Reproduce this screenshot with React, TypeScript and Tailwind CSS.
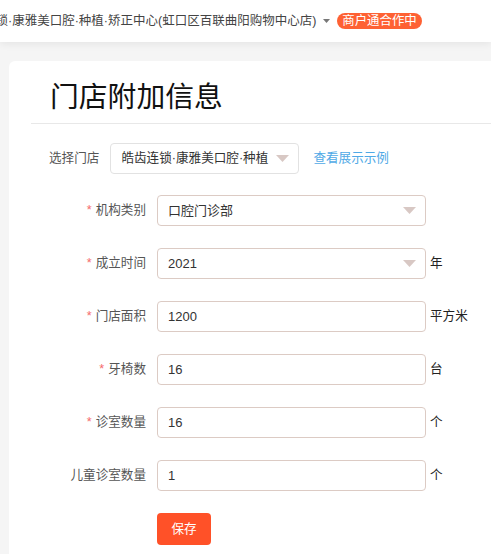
import type { JSX } from 'react';

const FONT = { fontFamily: '"Liberation Sans", "Noto Sans CJK SC", sans-serif' };

interface Field {
  readonly label: string;
  readonly value: string;
  readonly required: boolean;
  readonly select?: boolean;
  readonly unit?: string;
}

const FIELDS: Field[] = [
  { label: '机构类别', value: '口腔门诊部', required: true, select: true },
  { label: '成立时间', value: '2021', required: true, select: true, unit: '年' },
  { label: '门店面积', value: '1200', required: true, unit: '平方米' },
  { label: '牙椅数', value: '16', required: true, unit: '台' },
  { label: '诊室数量', value: '16', required: true, unit: '个' },
  { label: '儿童诊室数量', value: '1', required: false, unit: '个' },
];

function Caret(): JSX.Element {
  return (
    <svg width="13" height="7" viewBox="0 0 13 7" className="shrink-0" aria-hidden="true">
      <path d="M0 0h13L6.5 7z" fill="#d8c8c4" />
    </svg>
  );
}

function FieldRow({ f }: { readonly f: Field }): JSX.Element {
  return (
    <div className="flex h-[31px] items-center">
      <div className="w-[137px] shrink-0 text-right text-[12.6px] text-[#555]">
        {f.required && <span className="mr-[4px] text-[#f56c6c]">*</span>}
        {f.label}
      </div>
      <div className="ml-[11px] flex h-[31px] w-[269px] shrink-0 items-center justify-between rounded-[4px] border border-[#dccbc4] pl-[10px] pr-[9px] text-[13px] text-[#333]">
        <span>{f.value}</span>
        {f.select && <Caret />}
      </div>
      {f.unit && <span className="ml-[4px] text-[12.6px] text-[#222]">{f.unit}</span>}
    </div>
  );
}

export default function App(): JSX.Element {
  return (
    <div className="min-h-[554px] overflow-hidden bg-[#f5f5f5]" style={FONT}>
      <header className="relative z-10 flex h-[42px] items-center overflow-hidden whitespace-nowrap bg-white shadow-[0_2px_8px_rgba(0,0,0,0.07)]">
        <span className="ml-[-42px] text-[12.5px] text-[#444]">
          皓齿连锁·康雅美口腔·种植·矫正中心(虹口区百联曲阳购物中心店)
        </span>
        <svg width="7" height="4" viewBox="0 0 7 4" className="ml-[7px]" aria-hidden="true">
          <path d="M0 0h7L3.5 4z" fill="#777" />
        </svg>
        <span className="ml-[7px] flex h-[16px] items-center rounded-full bg-[#fe6133] px-[5px] text-[12.4px] text-white">
          商户通合作中
        </span>
      </header>

      <main className="pl-[9px] pt-[19px]">
        <section className="min-h-[493px] rounded-tl-[6px] bg-white">
          <div className="ml-[22px] flex h-[63px] items-center border-b border-[#e8e8e8] pl-[19px] pt-[10px]">
            <h1 className="text-[28.8px] leading-none text-[#111]">门店附加信息</h1>
          </div>

          <div className="mt-[19px] flex h-[31px] items-center pl-[40px]">
            <span className="text-[12.6px] text-[#555]">选择门店</span>
            <div className="ml-[11px] flex h-[31px] w-[189px] items-center justify-between overflow-hidden whitespace-nowrap rounded-[4px] border border-[#e2e2e2] pl-[10px] pr-[9px] text-[12.6px] text-[#333]">
              <span>皓齿连锁·康雅美口腔·种植</span>
              <Caret />
            </div>
            <span className="ml-[14px] text-[12.6px] text-[#4fa9e6]">查看展示示例</span>
          </div>

          <div className="mt-[21px] flex flex-col gap-[22px]">
            {FIELDS.map(f => (
              <FieldRow key={f.label} f={f} />
            ))}
          </div>

          <div className="mt-[22px] pl-[148px]">
            <button className="h-[32px] w-[54px] rounded-[4px] bg-[#ff5128] text-[12.6px] text-white">保存</button>
          </div>
        </section>
      </main>
    </div>
  );
}
